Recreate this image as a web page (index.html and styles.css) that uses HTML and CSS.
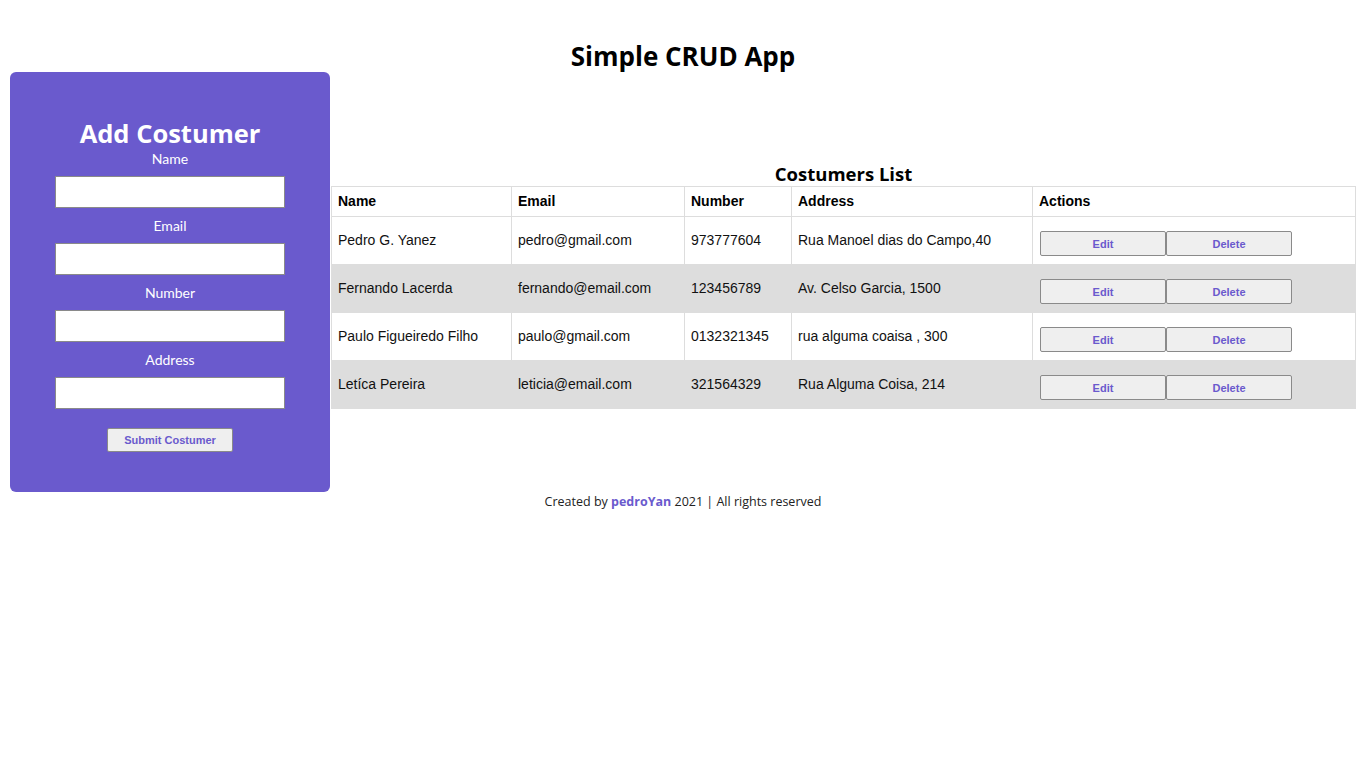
FILE: index.html
```html
<!DOCTYPE html>
<html lang="en">
<head>
<meta charset="utf-8">
<title>Simple CRUD App</title>
<link rel="stylesheet" href="styles.css">
</head>
<body>
<h1 class="app-title">Simple CRUD App</h1>
<div class="main">
  <form class="form-panel">
    <h2 class="form-title">Add Costumer</h2>
    <label class="field-label first">Name</label>
    <input class="field-input" type="text">
    <label class="field-label">Email</label>
    <input class="field-input" type="text">
    <label class="field-label">Number</label>
    <input class="field-input" type="text">
    <label class="field-label">Address</label>
    <input class="field-input" type="text">
    <button type="button" class="btn submit-btn">Submit Costumer</button>
  </form>
  <section class="list-section">
    <h2 class="list-title">Costumers List</h2>
    <table class="list-table">
      <colgroup>
        <col class="c-name"><col class="c-email"><col class="c-number"><col class="c-address"><col class="c-actions">
      </colgroup>
      <thead>
        <tr><th>Name</th><th>Email</th><th>Number</th><th>Address</th><th>Actions</th></tr>
      </thead>
      <tbody>
        <tr>
          <td>Pedro G. Yanez</td><td>pedro@gmail.com</td><td>973777604</td><td>Rua Manoel dias do Campo,40</td>
          <td><div class="actions"><button type="button" class="btn act-btn">Edit</button><button type="button" class="btn act-btn">Delete</button></div></td>
        </tr>
        <tr>
          <td>Fernando Lacerda</td><td>fernando@email.com</td><td>123456789</td><td>Av. Celso Garcia, 1500</td>
          <td><div class="actions"><button type="button" class="btn act-btn">Edit</button><button type="button" class="btn act-btn">Delete</button></div></td>
        </tr>
        <tr>
          <td>Paulo Figueiredo Filho</td><td>paulo@gmail.com</td><td>0132321345</td><td>rua alguma coaisa , 300</td>
          <td><div class="actions"><button type="button" class="btn act-btn">Edit</button><button type="button" class="btn act-btn">Delete</button></div></td>
        </tr>
        <tr>
          <td>Letíca Pereira</td><td>leticia@email.com</td><td>321564329</td><td>Rua Alguma Coisa, 214</td>
          <td><div class="actions"><button type="button" class="btn act-btn">Edit</button><button type="button" class="btn act-btn">Delete</button></div></td>
        </tr>
      </tbody>
    </table>
  </section>
</div>
<footer class="footer">Created by <strong class="author">pedroYan</strong> 2021 | All rights reserved</footer>
</body>
</html>
```
FILE: styles.css
```css
* { box-sizing: border-box; }
body {
  margin: 0;
  background: #fff;
  color: #000;
  font-family: "Open Sans", "Noto Sans", sans-serif;
}
.app-title {
  margin: 0;
  padding-top: 40px;
  font-size: 26px;
  line-height: 32px;
  font-weight: 700;
  text-align: center;
}
.main {
  display: flex;
  align-items: flex-start;
  margin: 0 10px;
}
.form-panel {
  width: 320px;
  flex: none;
  background: #6a5acd;
  border-radius: 6px;
  padding: 46px 0 40px;
  display: flex;
  flex-direction: column;
  align-items: center;
  color: #fff;
}
.form-title {
  margin: 0;
  font-size: 25.5px;
  line-height: 30px;
  font-weight: 700;
}
.field-label {
  font-family: "Lato", sans-serif;
  font-size: 14px;
  line-height: 18px;
  margin: 9px 0 8px;
}
.field-label.first { margin-top: 2px; }
.field-input {
  width: 230px;
  height: 32px;
  border: 1px solid #8a8a8a;
  background: #fff;
  margin: 0;
}
.btn {
  font-family: "Liberation Sans", Arial, sans-serif;
  font-weight: 700;
  font-size: 11px;
  color: #6a5acd;
  background: #efefef;
  border: 1px solid #8a8a8a;
  border-radius: 2px;
  padding: 0;
  margin: 0;
}
.submit-btn {
  margin-top: 19px;
  width: 126px;
  height: 24px;
}
.list-section {
  flex: 1;
  margin-left: 1px;
  padding-top: 90px;
}
.list-title {
  margin: 0;
  text-align: center;
  font-size: 18.5px;
  line-height: 24px;
  font-weight: 700;
}
.list-table {
  width: 100%;
  border-collapse: collapse;
  font-family: "Liberation Sans", Arial, sans-serif;
  font-size: 14px;
  color: #111;
}
.c-name { width: 180px; }
.c-email { width: 173px; }
.c-number { width: 107px; }
.c-address { width: 241px; }
.list-table th,
.list-table td {
  border: 1px solid #ddd;
  text-align: left;
  padding: 0 6px 2px;
  vertical-align: middle;
}
.list-table th {
  height: 30px;
  font-weight: 700;
  color: #000;
}
.list-table td { height: 48px; }
.list-table tbody tr:nth-child(even) { background: #ddd; }
.actions { display: flex; padding-top: 8px; margin-left: 1px; }
.act-btn {
  width: 126px;
  height: 25px;
}
.footer {
  text-align: center;
  font-size: 12.5px;
  line-height: 20px;
  color: #222;
}
.author { color: #6a5acd; font-weight: 700; }
```
